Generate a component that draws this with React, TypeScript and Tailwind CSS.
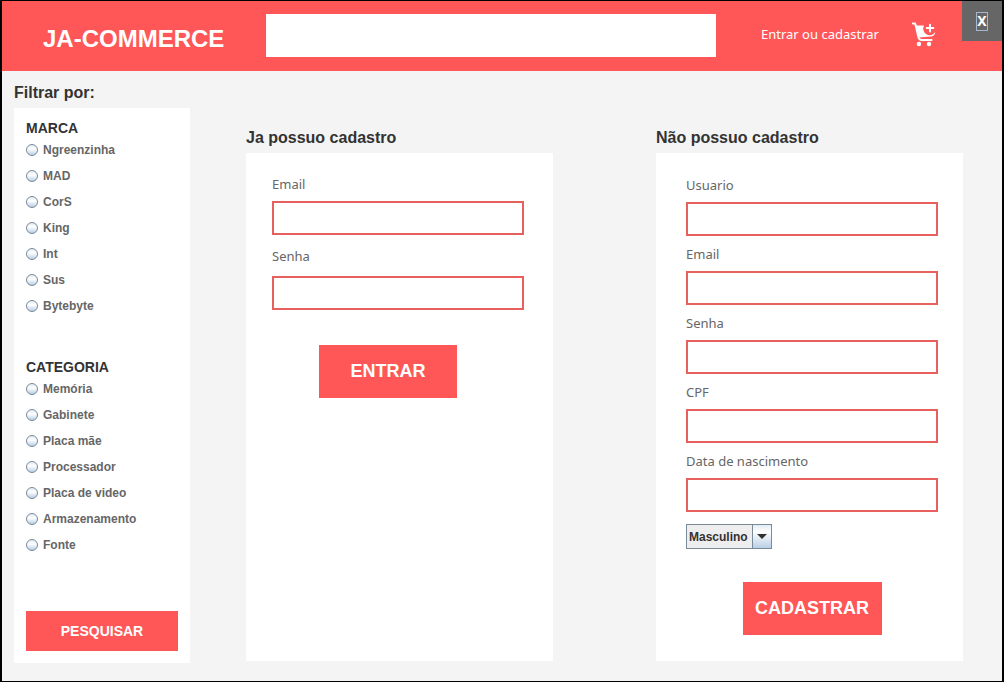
import React, { useState } from "react";

const brands = ["Ngreenzinha", "MAD", "CorS", "King", "Int", "Sus", "Bytebyte"];
const categories = [
  "Memória",
  "Gabinete",
  "Placa mãe",
  "Processador",
  "Placa de video",
  "Armazenamento",
  "Fonte",
];

function CartPlusIcon() {
  return (
    <svg viewBox="0 0 24 26" className="h-[26px] w-6" aria-hidden="true">
      <path
        d="M0.9 1.4H3L4 4.4L6 13.6Q6.8 18 9.8 18H19.6"
        fill="none"
        stroke="#fff"
        strokeWidth="2"
        strokeLinecap="round"
        strokeLinejoin="round"
      />
      <path
        d="M3.2 3.4H12A6.4 6.4 0 0 0 23.4 9.8Q22.6 14.2 19.4 14.6L6.4 15.6Z"
        fill="#fff"
      />
      <path d="M18 2.8V9.4M14.7 6.1H21.3" stroke="#fff" strokeWidth="2" strokeLinecap="round" />
      <circle cx="6.9" cy="22" r="2.2" fill="#fff" />
      <circle cx="17" cy="22" r="2.2" fill="#fff" />
    </svg>
  );
}

function RadioGroup({ title, name, options }: { title: string; name: string; options: string[] }) {
  return (
    <fieldset>
      <legend className="h-[18px] text-sm leading-[18px] font-bold text-[#333]">{title}</legend>
      {options.map((option) => (
        <label
          key={option}
          className="flex h-[26px] items-center gap-[5px] text-xs font-bold text-[#666]"
        >
          <input
            type="radio"
            name={name}
            value={option}
            className="size-3 shrink-0 appearance-none rounded-full border border-[#7a8a99] bg-linear-to-b from-[#e2ebf4] via-white via-40% to-[#b8cfe5] checked:border-4"
          />
          {option}
        </label>
      ))}
    </fieldset>
  );
}

function Field({
  id,
  label,
  type = "text",
  spacing = "gap-[7px]",
}: {
  id: string;
  label: string;
  type?: string;
  spacing?: string;
}) {
  return (
    <div className={`flex flex-col ${spacing}`}>
      <label htmlFor={id} className="font-['Noto_Sans',sans-serif] text-[13px] leading-5 text-[#666]">
        {label}
      </label>
      <input
        id={id}
        type={type}
        className="h-[34px] w-full border-2 border-[#e8605e] bg-white px-2 text-sm outline-none"
      />
    </div>
  );
}

export default function App() {
  const [gender, setGender] = useState("Masculino");

  return (
    <div className="flex min-h-screen flex-col border-x-2 border-y border-black bg-[#f4f4f4] font-['Liberation_Sans',Arial,sans-serif]">
      <header className="flex h-[70px] items-center bg-[#ff5757] pb-0.5">
        <h1 className="w-[264px] shrink-0 pt-2 pl-[41px] text-2xl font-bold text-white">
          JA-COMMERCE
        </h1>
        <input
          type="search"
          aria-label="Buscar"
          className="h-[43px] min-w-0 flex-1 bg-white px-3 text-base outline-none"
        />
        <nav className="flex w-[246px] shrink-0 items-center justify-between pr-[26px] pl-[45px]">
          <a
            href="#entrar"
            className="font-['Noto_Sans',sans-serif] text-[13px] whitespace-nowrap text-white"
          >
            Entrar ou cadastrar
          </a>
          <a href="#carrinho" aria-label="Carrinho">
            <CartPlusIcon />
          </a>
        </nav>
        <button
          type="button"
          aria-label="Fechar"
          className="flex size-10 shrink-0 items-center justify-center self-start bg-[#666]"
        >
          <span className="flex h-[19px] w-3 items-center justify-center border border-[#a3b8cc] font-['Noto_Sans',sans-serif] text-sm font-bold text-white">
            X
          </span>
        </button>
      </header>

      <main className="flex flex-1 gap-14 pr-[39px] pb-[18px] pl-3">
        <aside className="flex w-44 shrink-0 flex-col pt-[11px]">
          <h2 className="mb-1 text-base leading-[22px] font-bold text-[#333]">Filtrar por:</h2>
          <form
            className="flex flex-1 flex-col bg-white px-3 pt-[11px] pb-3"
            onSubmit={(e) => e.preventDefault()}
          >
            <RadioGroup title="MARCA" name="marca" options={brands} />
            <div className="mt-[39px]">
              <RadioGroup title="CATEGORIA" name="categoria" options={categories} />
            </div>
            <button className="mt-auto h-10 w-full bg-[#ff5757] text-sm font-bold text-white">
              PESQUISAR
            </button>
          </form>
        </aside>

        <div className="grid min-w-0 flex-1 grid-cols-2 gap-[103px] pt-14 pb-0.5">
          <section className="flex flex-col">
            <h2 className="mb-1 text-base leading-[22px] font-bold text-[#333]">
              Ja possuo cadastro
            </h2>
            <form
              className="flex flex-1 flex-col bg-white pt-[21px] pr-[29px] pl-[26px]"
              onSubmit={(e) => e.preventDefault()}
            >
              <div className="flex flex-col gap-[11px]">
                <Field id="login-email" label="Email" />
                <Field id="login-senha" label="Senha" type="password" spacing="gap-[10px]" />
              </div>
              <button className="mt-[35px] mr-5 h-[53px] w-[138px] self-center bg-[#ff5757] pb-0.5 text-lg font-bold text-white">
                ENTRAR
              </button>
            </form>
          </section>

          <section className="flex flex-col">
            <h2 className="mb-1 text-base leading-[22px] font-bold text-[#333]">
              Não possuo cadastro
            </h2>
            <form
              className="flex flex-1 flex-col bg-white pt-[22px] pr-[25px] pb-[26px] pl-[30px]"
              onSubmit={(e) => e.preventDefault()}
            >
              <div className="flex flex-col gap-2">
                <Field id="usuario" label="Usuario" />
                <Field id="email" label="Email" />
                <Field id="senha" label="Senha" type="password" />
                <Field id="cpf" label="CPF" />
                <Field id="nascimento" label="Data de nascimento" />
              </div>
              <div className="relative mt-3 w-[86px]">
                <select
                  aria-label="Sexo"
                  value={gender}
                  onChange={(e) => setGender(e.target.value)}
                  className="block h-[25px] w-full appearance-none border border-[#7a8a99] bg-[#eee] pl-0.5 text-xs font-bold text-[#333] outline-none"
                >
                  <option>Masculino</option>
                  <option>Feminino</option>
                </select>
                <span className="pointer-events-none absolute inset-y-0 right-0 flex w-5 items-center justify-center border border-[#7a8a99] bg-linear-to-b from-[#e2ebf4] via-white via-30% to-[#b8cfe5]">
                  <svg viewBox="0 0 10 5" className="h-[5px] w-2.5" aria-hidden="true">
                    <path d="M0 0H10L5 5Z" fill="#333" />
                  </svg>
                </span>
              </div>
              <button className="mt-[33px] h-[53px] w-[139px] self-center bg-[#ff5757] pb-0.5 text-lg font-bold text-white">
                CADASTRAR
              </button>
            </form>
          </section>
        </div>
      </main>
    </div>
  );
}
